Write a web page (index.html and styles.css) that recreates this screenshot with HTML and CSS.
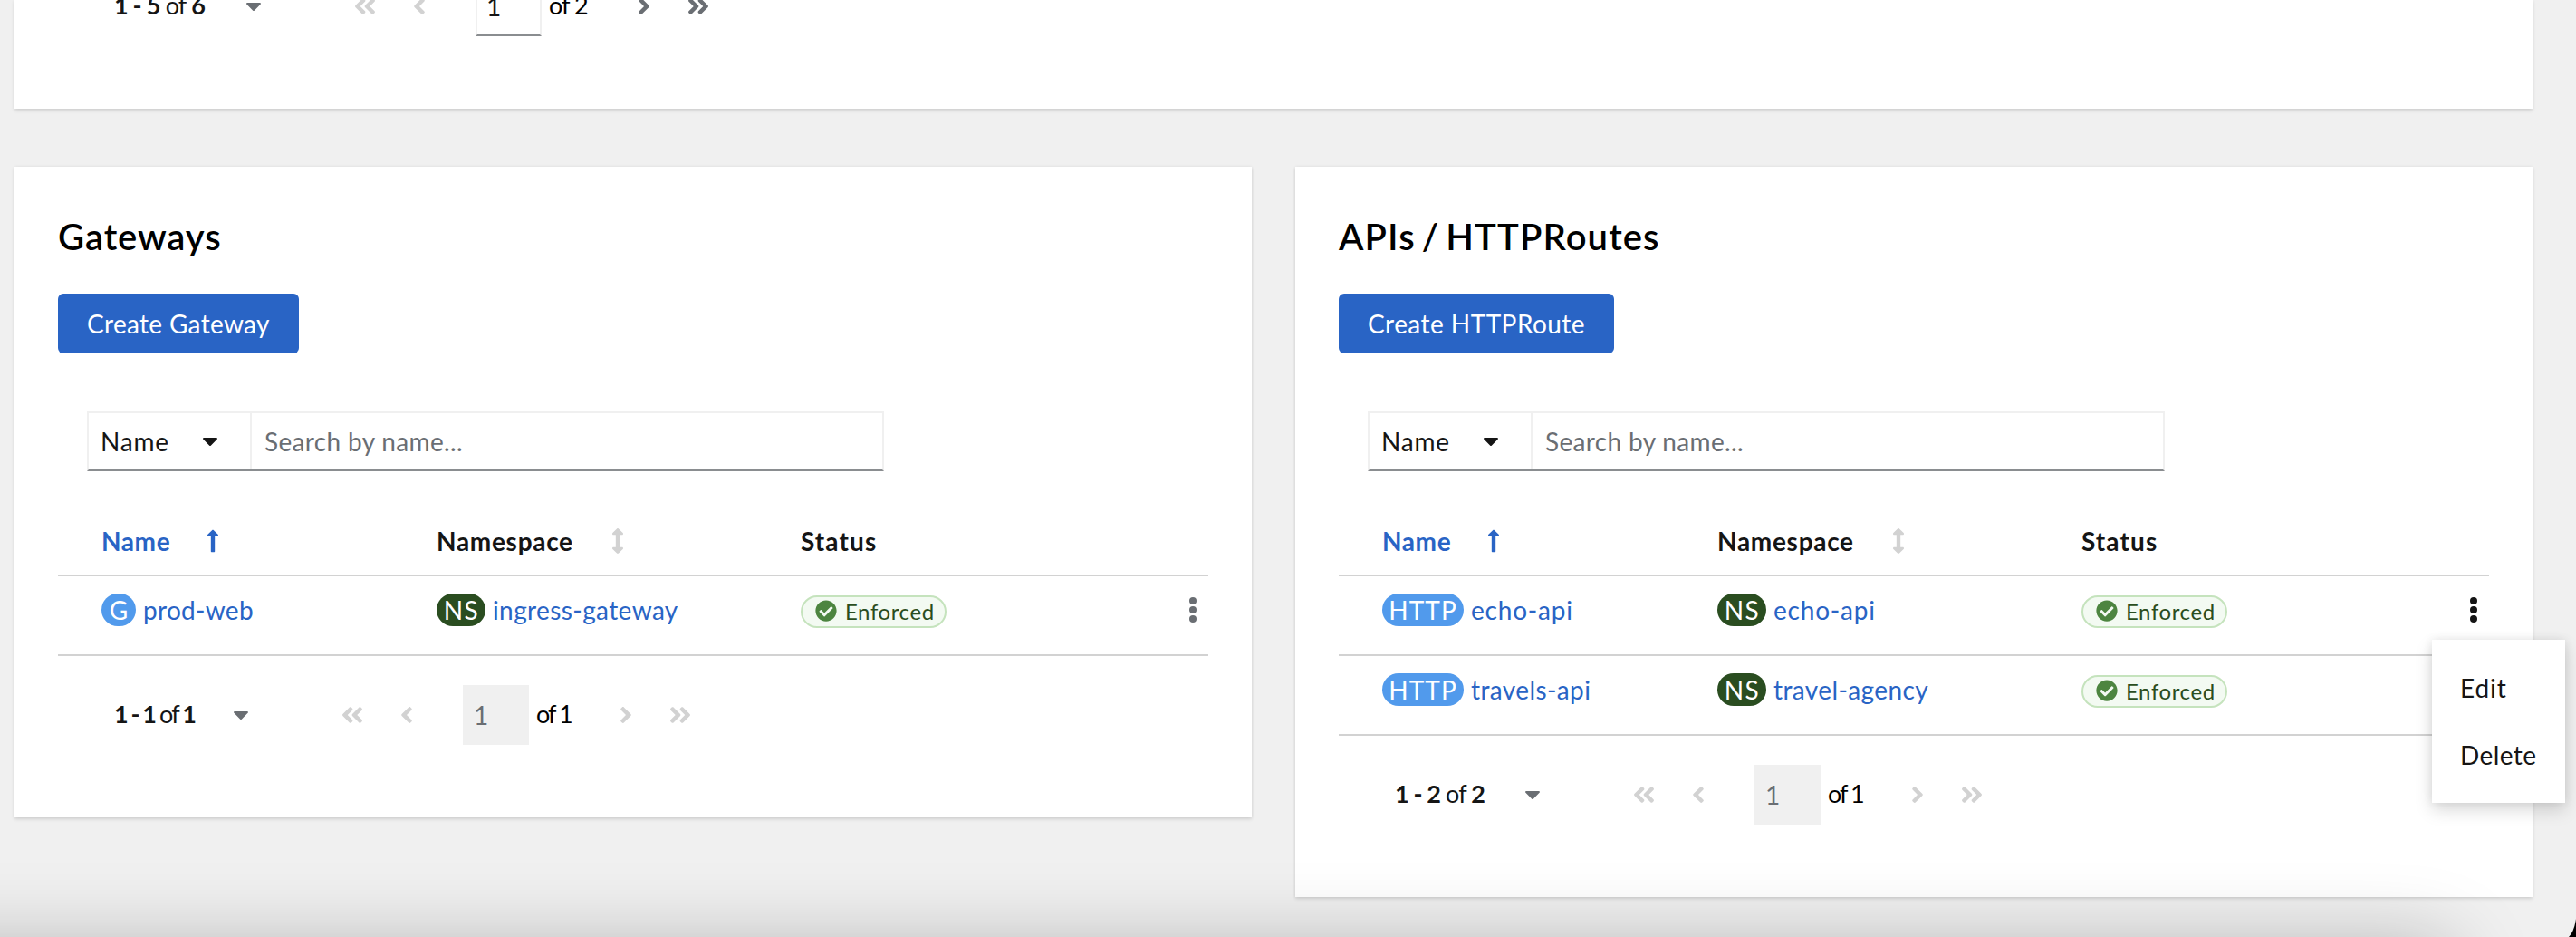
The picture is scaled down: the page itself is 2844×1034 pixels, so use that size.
FILE: index.html
```html
<!DOCTYPE html>
<html lang="en">
<head>
<meta charset="utf-8">
<title>Gateways and APIs</title>
<link rel="stylesheet" href="styles.css">
</head>
<body>
<svg class="sprite" aria-hidden="true">
  <symbol id="angle-left" viewBox="24 96 208 320"><path d="M31.7 239l136-136c9.4-9.4 24.6-9.4 33.9 0l22.6 22.6c9.4 9.4 9.4 24.6 0 33.9L127.9 256l96.4 96.4c9.4 9.4 9.4 24.6 0 33.9L201.7 409c-9.4 9.4-24.6 9.4-33.9 0l-136-136c-9.5-9.4-9.5-24.6-.1-34z"/></symbol>
  <symbol id="angle-double-left" viewBox="24 96 400 320"><path d="M31.7 239l136-136c9.4-9.4 24.6-9.4 33.9 0l22.6 22.6c9.4 9.4 9.4 24.6 0 33.9L127.9 256l96.4 96.4c9.4 9.4 9.4 24.6 0 33.9L201.7 409c-9.4 9.4-24.6 9.4-33.9 0l-136-136c-9.5-9.4-9.5-24.6-.1-34z"/><path transform="translate(192 0)" d="M31.7 239l136-136c9.4-9.4 24.6-9.4 33.9 0l22.6 22.6c9.4 9.4 9.4 24.6 0 33.9L127.9 256l96.4 96.4c9.4 9.4 9.4 24.6 0 33.9L201.7 409c-9.4 9.4-24.6 9.4-33.9 0l-136-136c-9.5-9.4-9.5-24.6-.1-34z"/></symbol>
  <symbol id="caret-down" viewBox="11 192 298 169"><path d="M31.3 192h257.3c17.8 0 26.7 21.5 14.1 34.1L174.1 354.7c-7.8 7.8-20.5 7.8-28.3 0L17.2 226.1C4.6 213.5 13.5 192 31.3 192z"/></symbol>
  <symbol id="check-circle" viewBox="0 0 512 512"><path d="M504 256c0 136.967-111.033 248-248 248S8 392.967 8 256 119.033 8 256 8s248 111.033 248 248zM227.314 387.314l184-184c6.248-6.248 6.248-16.379 0-22.627l-22.627-22.627c-6.248-6.249-16.379-6.249-22.628 0L216 308.118l-70.059-70.059c-6.248-6.248-16.379-6.248-22.628 0l-22.627 22.627c-6.248 6.248-6.248 16.379 0 22.627l104 104c6.249 6.249 16.379 6.249 22.628.001z"/></symbol>
  <symbol id="arrow-up" viewBox="0 0 256 512"><path d="M88 166.059V468c0 6.627 5.373 12 12 12h56c6.627 0 12-5.373 12-12V166.059h46.059c21.382 0 32.09-25.851 16.971-40.971l-86.059-86.059c-9.373-9.373-24.569-9.373-33.941 0l-86.059 86.059c-15.119 15.119-4.411 40.971 16.971 40.971H88z"/></symbol>
  <symbol id="arrows-v" viewBox="0 0 256 512"><path d="M214.059 377.941H168V134.059h46.059c21.382 0 32.09-25.851 16.971-40.971L144.971 7.029c-9.373-9.373-24.568-9.373-33.941 0L24.971 93.088c-15.119 15.119-4.411 40.971 16.971 40.971H88v243.882H41.941c-21.382 0-32.09 25.851-16.971 40.971l86.059 86.059c9.373 9.373 24.568 9.373 33.941 0l86.059-86.059c15.12-15.119 4.412-40.971-16.97-40.971z"/></symbol>
  <symbol id="kebab" viewBox="0 0 8 28"><circle cx="4" cy="4" r="4"/><circle cx="4" cy="14" r="4"/><circle cx="4" cy="24" r="4"/></symbol>
</svg>

<main class="page">
  <section class="card card-top">
    <div class="pagination">
      <span class="range wide"><b>1 - 5</b> of <b>6</b></span>
      <svg class="caret muted"><use href="#caret-down"/></svg>
      <svg class="double first"><use href="#angle-double-left"/></svg>
      <svg class="single prev"><use href="#angle-left"/></svg>
      <span class="page-input active">1</span>
      <span class="pages two">of 2</span>
      <svg class="single next flip muted"><use href="#angle-left"/></svg>
      <svg class="double last flip muted"><use href="#angle-double-left"/></svg>
    </div>
  </section>

  <div class="columns">
    <section class="card">
      <h2 class="title gateways">Gateways</h2>
      <button class="create create-gateway">Create Gateway</button>
      <div class="toolbar">
        <div class="filter"><span>Name</span><svg class="caret"><use href="#caret-down"/></svg></div>
        <div class="search">Search by name...</div>
      </div>
      <div class="row head">
        <div class="cell sorted"><span class="h-name">Name</span><svg class="sort"><use href="#arrow-up"/></svg></div>
        <div class="cell"><span class="h-ns">Namespace</span><svg class="sort idle"><use href="#arrows-v"/></svg></div>
        <div class="cell"><span class="h-status">Status</span></div>
      </div>
      <div class="row">
        <div class="cell"><span class="pill g">G</span><a class="link prod">prod-web</a></div>
        <div class="cell"><span class="pill ns">NS</span><a class="link">ingress-gateway</a></div>
        <div class="cell"><span class="status"><svg class="check"><use href="#check-circle"/></svg>Enforced</span></div>
        <svg class="kebab muted"><use href="#kebab"/></svg>
      </div>
      <div class="pagination">
        <span class="range"><b>1 - 1</b> of <b>1</b></span>
        <svg class="caret muted"><use href="#caret-down"/></svg>
        <svg class="double first"><use href="#angle-double-left"/></svg>
        <svg class="single prev"><use href="#angle-left"/></svg>
        <span class="page-input">1</span>
        <span class="pages">of 1</span>
        <svg class="single next flip"><use href="#angle-left"/></svg>
        <svg class="double last flip"><use href="#angle-double-left"/></svg>
      </div>
    </section>

    <section class="card">
      <h2 class="title routes">APIs / HTTPRoutes</h2>
      <button class="create create-route">Create HTTPRoute</button>
      <div class="toolbar">
        <div class="filter"><span>Name</span><svg class="caret"><use href="#caret-down"/></svg></div>
        <div class="search">Search by name...</div>
      </div>
      <div class="row head">
        <div class="cell sorted"><span class="h-name">Name</span><svg class="sort"><use href="#arrow-up"/></svg></div>
        <div class="cell"><span class="h-ns">Namespace</span><svg class="sort idle"><use href="#arrows-v"/></svg></div>
        <div class="cell"><span class="h-status">Status</span></div>
      </div>
      <div class="row">
        <div class="cell"><span class="pill http">HTTP</span><a class="link echo">echo-api</a></div>
        <div class="cell"><span class="pill ns">NS</span><a class="link echo">echo-api</a></div>
        <div class="cell"><span class="status"><svg class="check"><use href="#check-circle"/></svg>Enforced</span></div>
        <div class="actions">
          <svg class="kebab"><use href="#kebab"/></svg>
          <div class="menu">
            <div class="item edit">Edit</div>
            <div class="item">Delete</div>
          </div>
        </div>
      </div>
      <div class="row">
        <div class="cell"><span class="pill http">HTTP</span><a class="link">travels-api</a></div>
        <div class="cell"><span class="pill ns">NS</span><a class="link">travel-agency</a></div>
        <div class="cell"><span class="status"><svg class="check"><use href="#check-circle"/></svg>Enforced</span></div>
      </div>
      <div class="pagination">
        <span class="range mid"><b>1 - 2</b> of <b>2</b></span>
        <svg class="caret muted"><use href="#caret-down"/></svg>
        <svg class="double first"><use href="#angle-double-left"/></svg>
        <svg class="single prev"><use href="#angle-left"/></svg>
        <span class="page-input">1</span>
        <span class="pages">of 1</span>
        <svg class="single next flip"><use href="#angle-left"/></svg>
        <svg class="double last flip"><use href="#angle-double-left"/></svg>
      </div>
    </section>
  </div>
  <div class="dock-shadow"></div>
  <svg class="corner" viewBox="0 0 8 20"><path d="M8 0V20H0Q6 14 8 0Z"/></svg>
</main>
</body>
</html>
```
FILE: styles.css
```css
* { box-sizing: border-box; }
body {
  margin: 0;
  background: #f0f0f0;
  color: #151515;
  font: 400 28px/42px Lato, "Liberation Sans", sans-serif;
  letter-spacing: .4px;
}
.sprite { position: absolute; width: 0; height: 0; }
svg { fill: currentColor; flex: none; display: block; }

.page {
  position: relative;
  height: 1034px;
  overflow: hidden;
  padding: 0 48px 0 16px;
}
.card {
  background: #fff;
  padding: 51px 48px 80px;
  box-shadow: 0 2px 4px rgba(3,3,3,.12), 0 0 4px rgba(3,3,3,.06);
}
.card-top { height: 120px; padding-top: 0; display: flex; }
.card-top .pagination { margin-top: -26px; }
.columns {
  display: grid;
  grid-template-columns: 1fr 1fr;
  gap: 48px;
  align-items: start;
  margin-top: 64px;
}

.title {
  margin: 0 0 37px;
  font-size: 40px;
  line-height: 52px;
  font-weight: 600;
  color: #000;
}
.gateways { letter-spacing: .9px; }
.routes { letter-spacing: 1.1px; word-spacing: -4px; }
.create {
  display: flex;
  align-items: center;
  height: 66px;
  padding: 0 32px 1px;
  border: 0;
  border-radius: 6px;
  background: #2964c5;
  color: #fff;
  font: inherit;
  white-space: nowrap;
}
.create-gateway { width: 266px; letter-spacing: .32px; }
.create-route { width: 304px; letter-spacing: .45px; }

.toolbar {
  display: flex;
  width: 880px;
  height: 66px;
  margin: 64px 0 40px 32px;
  border: 2px solid #f0f0f0;
  border-bottom-color: #8a8d90;
}
.filter {
  display: flex;
  align-items: center;
  justify-content: space-between;
  width: 180px;
  padding: 0 36px 0 13px;
  border-right: 2px solid #f0f0f0;
  letter-spacing: .8px;
}
.search { padding: 10px 14px; color: #6a6e73; letter-spacing: .35px; }
.caret { width: 16px; height: 9px; }

.row {
  display: grid;
  grid-template-columns: 370px 402px 429px 8px;
  align-items: center;
  height: 88px;
  padding: 0 0 12px 48px;
  border-bottom: 2px solid #d2d2d2;
}
.cell { display: flex; align-items: center; }
.head {
  height: 76px;
  padding-bottom: 0;
  font-weight: 700;
}
.sorted { color: #2964c5; }
.h-name { width: 116px; letter-spacing: .6px; }
.h-ns { width: 193px; letter-spacing: .7px; }
.h-status { letter-spacing: 1.1px; }
.sort { width: 14px; height: 28px; }
.idle { color: #d2d2d2; }

.pill {
  display: flex;
  align-items: center;
  justify-content: center;
  height: 36px;
  margin-right: 8px;
  padding-bottom: 1px;
  border-radius: 18px;
  background: #519aec;
  color: #fff;
}
.g { width: 38px; letter-spacing: 0; }
.ns { width: 54px; background: #2a4d20; letter-spacing: 1.5px; padding-left: 1px; }
.http { width: 90px; letter-spacing: 1.1px; }
.link { color: #2964c5; padding-bottom: 1px; }
.echo { letter-spacing: .8px; }
.prod { letter-spacing: .3px; }
.status {
  display: flex;
  align-items: center;
  width: 161px;
  height: 36px;
  margin-top: 4px;
  padding: 0 0 1px 14px;
  border: 2px solid #c5e3bd;
  border-radius: 18px;
  background: #f3faf2;
  color: #2a4d20;
  font-size: 24px;
  letter-spacing: .6px;
}
.check { width: 24px; height: 24px; margin: -1px 9px 0 0; color: #4d8540; }
.kebab { width: 8px; height: 28px; }
.muted.muted { color: #6a6e73; }
.actions { position: relative; }

.menu {
  position: absolute;
  z-index: 2;
  top: 47px;
  left: -42px;
  width: 147px;
  height: 180px;
  padding: 17px 31px;
  background: #fff;
  box-shadow: 0 8px 18px rgba(3,3,3,.15), 0 0 10px rgba(3,3,3,.08);
}
.item { height: 74px; line-height: 72px; }
.edit { letter-spacing: .9px; }

.pagination {
  display: flex;
  align-items: center;
  flex: none;
  height: 66px;
  margin: 32px 0 0 64px;
}
.range { width: 86px; padding-bottom: 2px; white-space: nowrap; font-size: 27px; letter-spacing: -1.9px; text-indent: -2px; }
.range b { font-weight: 700; }
.mid { width: 98px; letter-spacing: -.9px; }
.wide { width: 100px; letter-spacing: -.8px; }
.pagination .caret { margin: 0 104px 0 44px; }
.single { width: 12px; height: 18px; color: #d2d2d2; }
.double { width: 22px; height: 18px; color: #d2d2d2; }
.flip { transform: scaleX(-1); }
.prev { margin: 0 56px 0 43px; }
.next { margin: 0 43px 0 56px; }
.page-input {
  width: 73px;
  height: 66px;
  padding: 12px 12px;
  background: #f0f0f0;
  color: #6a6e73;
}
.active {
  padding: 10px 10px;
  background: #fff;
  color: #151515;
  border: 2px solid #f0f0f0;
  border-bottom-color: #8a8d90;
}
.pages { width: 37px; margin-left: 8px; padding-bottom: 2px; white-space: nowrap; color: #000; font-size: 27px; letter-spacing: -2px; }
.two { width: 43px; letter-spacing: -1px; }

/* Soft shade rising from whatever sits under the window */
.dock-shadow {
  position: absolute;
  top: 1042px;
  left: -200px;
  width: 2910px;
  height: 200px;
  border-radius: 30px;
  box-shadow: 0 0 86px rgba(0,0,0,.25);
}
.corner { position: absolute; right: 0; bottom: 0; width: 8px; height: 20px; color: #000; }
```
